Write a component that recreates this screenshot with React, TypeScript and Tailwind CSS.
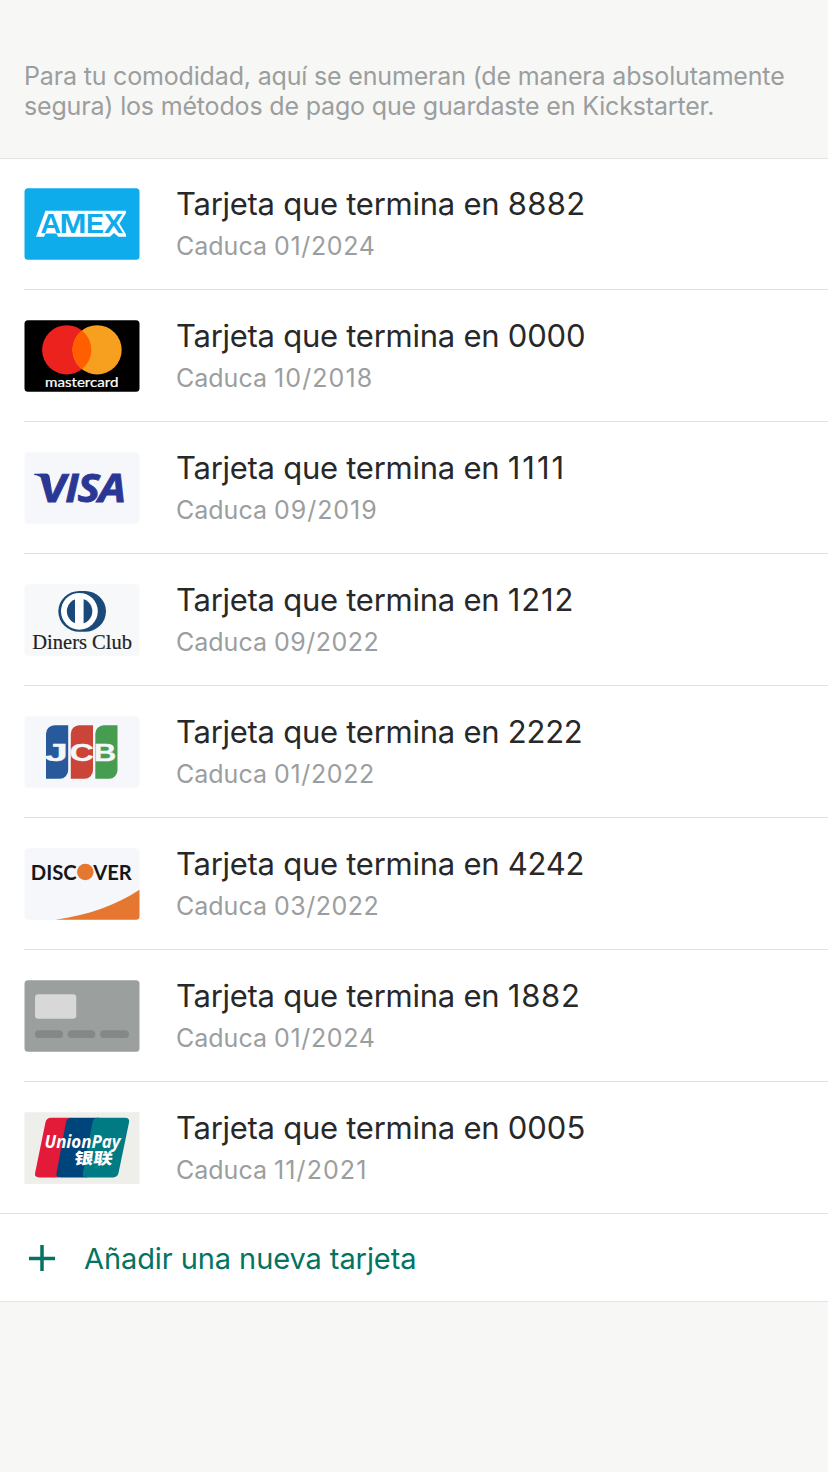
import type { ReactNode } from "react";

function CardArt({ fill, square, children }: { fill: string; square?: boolean; children: ReactNode }) {
  return (
    <svg viewBox="0 0 116 72" className="h-[72px] w-[116px] shrink-0 overflow-visible" aria-hidden="true">
      <rect x="0.5" y="0.25" width="115" height="71.6" rx={square ? 0 : 3.5} fill={fill} />
      {children}
    </svg>
  );
}

const Amex = () => (
  <CardArt fill="#0facec">
    <path d="M12 48.700L21.500 22.800H102V25L95.500 35.500L102 46.500V48.700H94.500L90 45L86 48.700H34L32.500 45.500H21.500L20 48.700Z" fill="#fff" />
    <g fontFamily="Liberation Sans, sans-serif" fontWeight="700" fontSize="27.500" fill="#0facec">
      <text x="16.500" y="45.300" textLength="20.500" lengthAdjust="spacingAndGlyphs">A</text>
      <text x="35.500" y="45.300" textLength="27" lengthAdjust="spacingAndGlyphs">M</text>
      <text x="62" y="45.300" textLength="18" lengthAdjust="spacingAndGlyphs">E</text>
      <text x="80" y="45.300" textLength="19" lengthAdjust="spacingAndGlyphs">X</text>
    </g>
  </CardArt>
);

const Mastercard = () => (
  <CardArt fill="#000">
    <circle cx="42.7" cy="29.8" r="24.6" fill="#eb221e" />
    <circle cx="73.1" cy="29.8" r="24.6" fill="#f79f1f" />
    <path d="M57.9 10.4a24.6 24.6 0 0 1 0 38.8a24.6 24.6 0 0 1 0-38.8z" fill="#ff5f00" />
    <text x="21" y="66.6" textLength="73.500" lengthAdjust="spacingAndGlyphs" fontFamily="Lato, sans-serif" fontSize="12.500" fill="#fff" stroke="#fff" strokeWidth="0.200">mastercard</text>
  </CardArt>
);

const Visa = () => (
  <CardArt fill="#f6f7fa">
    <path d="M10.200 21.700H22c2 0 3.200 1 3.600 2.800l2 13C24 29 18.500 24.500 10 22.700z" fill="#2a3794" />
    <g fontFamily="Open Sans, sans-serif" fontWeight="700" fontSize="39" fill="#2a3794" stroke="#2a3794" strokeWidth="0.800">
      <text transform="translate(13.200 49.700) skewX(-6)" textLength="29" lengthAdjust="spacingAndGlyphs">V</text>
      <g fontStyle="italic">
        <text x="41.200" y="49.700" textLength="13.500" lengthAdjust="spacingAndGlyphs">I</text>
        <text x="53.500" y="49.700" textLength="22.500" lengthAdjust="spacingAndGlyphs">S</text>
        <text x="74.500" y="49.700" textLength="27.500" lengthAdjust="spacingAndGlyphs">A</text>
      </g>
    </g>
  </CardArt>
);

const Diners = () => (
  <CardArt fill="#f6f8fa">
    <rect x="34.300" y="7" width="47.700" height="40.700" rx="21" ry="20.350" fill="#194a79" />
    <circle cx="55.400" cy="27.300" r="18.400" fill="#fff" />
    <circle cx="55.600" cy="27.300" r="12.700" fill="#194a79" />
    <rect x="51" y="14" width="8.600" height="27" fill="#fff" />
    <text x="8.300" y="64.500" textLength="99.700" lengthAdjust="spacingAndGlyphs" fontFamily="Liberation Serif, serif" fontSize="22" fill="#222" stroke="#222" strokeWidth="0.200">Diners Club</text>
  </CardArt>
);

const Jcb = () => (
  <CardArt fill="#f6f7fa">
    <path d="M30.500 9.200h13.700v44.800a8.500 8.500 0 0 1-8.500 8.700H22V18a8.500 8.500 0 0 1 8.500-8.800z" fill="#285a9b" />
    <path d="M55.300 9.200H69v44.800a8.500 8.500 0 0 1-8.500 8.700H46.800V18a8.500 8.500 0 0 1 8.500-8.800z" fill="#cb4438" />
    <path d="M79.800 9.200h13.700v44.800a8.500 8.500 0 0 1-8.500 8.700H71.300V18a8.500 8.500 0 0 1 8.500-8.800z" fill="#469c51" />
    <g fontFamily="Liberation Sans, sans-serif" fontWeight="700" fontSize="24" fill="#f6f7fa" stroke="#f6f7fa" strokeWidth="0.300">
      <text x="20.500" y="44.600" textLength="23.500" lengthAdjust="spacingAndGlyphs">J</text>
      <text x="45.500" y="44.600" textLength="24.500" lengthAdjust="spacingAndGlyphs">C</text>
      <text x="69.800" y="44.600" textLength="22.500" lengthAdjust="spacingAndGlyphs">B</text>
    </g>
  </CardArt>
);

const Discover = () => (
  <CardArt fill="#f6f7fa">
    <path d="M31.500 71.850C64 67 91 58 115.500 41.800V68.350a3.500 3.500 0 0 1-3.500 3.500z" fill="#e67730" />
    <g fontFamily="Lato, sans-serif" fontWeight="700" fontSize="21.800" fill="#171717">
      <text x="6.800" y="31.700" textLength="46" lengthAdjust="spacingAndGlyphs">DISC</text>
      <text x="69.300" y="31.700" textLength="38.500" lengthAdjust="spacingAndGlyphs">VER</text>
    </g>
    <circle cx="61.300" cy="24" r="8.300" fill="#e67730" />
  </CardArt>
);

const Generic = () => (
  <CardArt fill="#9b9f9e">
    <rect x="11" y="14.200" width="41.300" height="24.500" rx="3.200" fill="#d8d8d8" />
    <g fill="#848988">
      <rect x="11" y="50.300" width="28" height="7.700" rx="3.850" />
      <rect x="43.700" y="50.300" width="27.600" height="7.700" rx="3.850" />
      <rect x="76" y="50.300" width="29" height="7.700" rx="3.850" />
    </g>
  </CardArt>
);

const UnionPay = () => (
  <CardArt fill="#eeefeb" square>
    <path d="M27 5.700H47L35 65.400H15.500Q10 65.400 11.200 60.500L21.500 10.200Q22.500 5.700 27 5.700z" fill="#e31a38" />
    <path d="M47 5.700H75L63 65.400H36.500Q31.500 65.400 32.600 60.500L42 10.200Q43 5.700 47 5.700z" fill="#00447c" />
    <path d="M73.500 5.700H101Q106 5.700 105 10.500L94.500 61Q93.500 65.400 89 65.400H63Q58 65.400 59 60.500L68.500 10.200Q69.500 5.700 73.500 5.700z" fill="#007b84" />
    <text x="20.500" y="35.700" textLength="76" lengthAdjust="spacingAndGlyphs" fontFamily="Open Sans, sans-serif" fontStyle="italic" fontWeight="700" fontSize="18.500" fill="#fff">UnionPay</text>
    <text transform="translate(49.500 52) skewX(-8) scale(1.220 1)" x="0" y="0" fontFamily="Noto Sans CJK SC, sans-serif" fontWeight="900" fontSize="15.800" fill="#fff">银联</text>
  </CardArt>
);

const cards: { art: ReactNode; last: string; lastTracking: string; expires: string; dateTracking: string }[] = [
  { art: <Amex />, last: "8882", lastTracking: "tracking-[0.3px]", expires: "01/2024", dateTracking: "tracking-[0.65px]" },
  { art: <Mastercard />, last: "0000", lastTracking: "tracking-[-0.15px]", expires: "10/2018", dateTracking: "tracking-[1.1px]" },
  { art: <Visa />, last: "1111", lastTracking: "tracking-[2px]", expires: "09/2019", dateTracking: "tracking-[0.95px]" },
  { art: <Diners />, last: "1212", lastTracking: "tracking-[0.9px]", expires: "09/2022", dateTracking: "tracking-[0.5px]" },
  { art: <Jcb />, last: "2222", lastTracking: "tracking-[-0.2px]", expires: "01/2022", dateTracking: "tracking-[0.65px]" },
  { art: <Discover />, last: "4242", lastTracking: "tracking-[-0.2px]", expires: "03/2022", dateTracking: "tracking-[0.5px]" },
  { art: <Generic />, last: "1882", lastTracking: "tracking-[0.8px]", expires: "01/2024", dateTracking: "tracking-[0.65px]" },
  { art: <UnionPay />, last: "0005", lastTracking: "tracking-[0px]", expires: "11/2021", dateTracking: "tracking-[1.1px]" },
];

export default function App() {
  return (
    <main className="min-h-screen bg-[#f7f7f5] font-['Inter',sans-serif]">
      <header className="h-[158px] px-6 pt-[61px]">
        <p className="text-[25px] leading-[30px] tracking-[-0.17px] whitespace-nowrap text-[#9b9e9e]">
          Para tu comodidad, aquí se enumeran (de manera absolutamente
          <br />
          segura) los métodos de pago que guardaste en Kickstarter.
        </p>
      </header>
      <section className="border-y border-[#e3e4e4] bg-white">
        <ul className="-mt-px">
          {cards.map(({ art, last, lastTracking, expires, dateTracking }) => (
            <li key={last} className="group h-[132px] pl-6 last:pl-0">
              <div className="flex h-full border-b border-[#e0e1e1] pt-[30px] group-last:pl-6">
                {art}
                <div className="ml-[36px] whitespace-nowrap">
                  <h2 className="-mt-[4px] text-[31px] leading-[40px] tracking-[-0.26px] text-[#282828]">
                    Tarjeta que termina en <span className={lastTracking}>{last}</span>
                  </h2>
                  <p className="mt-[6px] text-[25px] leading-[32px] text-[#9b9e9e]">
                    Caduca <span className={dateTracking}>{expires}</span>
                  </p>
                </div>
              </div>
            </li>
          ))}
        </ul>
        <button className="flex h-[87px] w-full items-center pl-[29px] text-[#037362]">
          <svg viewBox="0 0 26 26" className="h-[26px] w-[26px]" fill="none" stroke="currentColor" strokeWidth="3.500" aria-hidden="true">
            <path d="M13 0v26M0 13.500h26" />
          </svg>
          <span className="mt-[2px] ml-[29px] text-[29px] tracking-[-0.08px] whitespace-nowrap">Añadir una nueva tarjeta</span>
        </button>
      </section>
    </main>
  );
}
